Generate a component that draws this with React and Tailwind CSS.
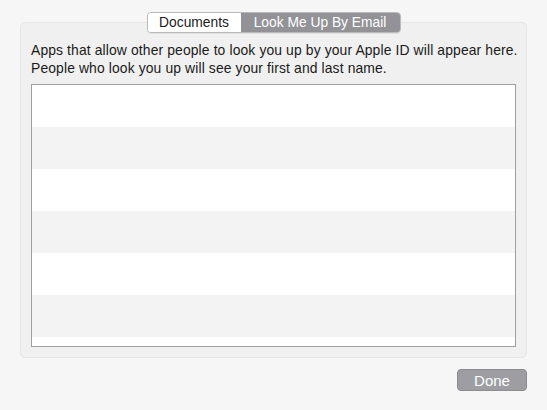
import React from "react";

const rows = [0, 1, 2, 3, 4, 5, 6];

export default function App() {
  return (
    <div
      className="w-[547px] h-[410px] bg-[#f6f6f6] pt-[12px] px-[20px] flex flex-col text-[13.9px] text-[#1a1a1a]"
      style={{ fontFamily: '"Liberation Sans", Arial, sans-serif' }}
    >
      {/* segmented tab control sitting on the top edge of the box */}
      <div className="relative z-10 flex justify-center h-[21px]">
        <div className="flex h-[21px] rounded-[4px] border border-[#b9b9b9] overflow-hidden shadow-[0_1px_0_rgba(0,0,0,0.06)]">
          <div className="w-[93px] bg-white flex items-center justify-center leading-none text-[#1a1a1a] text-[13.8px]">
            Documents
          </div>
          <div className="w-[159px] bg-[#929297] flex items-center justify-center leading-none text-white text-[13.8px]">
            Look Me Up By Email
          </div>
        </div>
      </div>

      <div className="-mt-[11px] h-[336px] rounded-[5px] border border-[#e5e5e5] bg-[#f0f0f0] pt-[18px] px-[10px] pb-[10px] flex flex-col">
        <p className="leading-[18px] tracking-[0.12px] whitespace-nowrap">
          Apps that allow other people to look you up by your Apple ID will appear here.
          <br />
          People who look you up will see your first and last name.
        </p>
        <div className="mt-[7px] flex-1 border border-[#9f9f9f] bg-white overflow-hidden">
          {rows.map((i) => (
            <div
              key={i}
              className={i % 2 === 0 ? "h-[42px] bg-white" : "h-[42px] bg-[#f3f3f3]"}
            />
          ))}
        </div>
      </div>

      <div className="mt-[11px] flex justify-end">
        <button className="w-[70px] h-[22px] rounded-[4px] border border-[#8c8c90] bg-[#9d9da2] text-white leading-none text-[15px]">
          Done
        </button>
      </div>
    </div>
  );
}
